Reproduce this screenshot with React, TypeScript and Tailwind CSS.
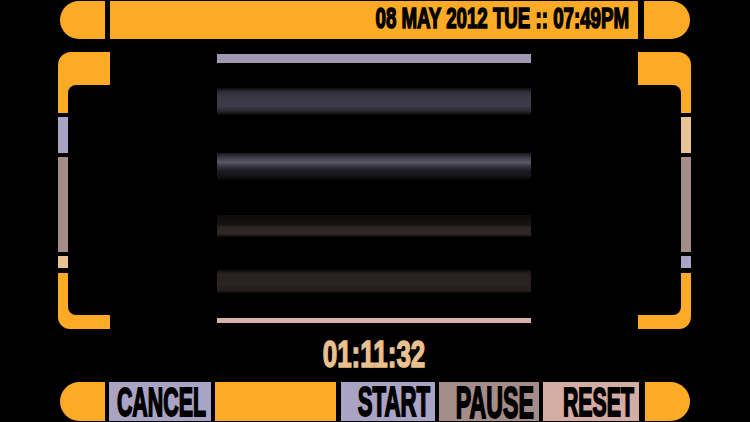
import React from 'react';

const ORANGE = 'bg-[#fdab26]';

// small inner-corner fillet for the LCARS elbows
const Fillet = ({ corner }: { corner: string }) => (
  <div className={`w-[8px] h-[8px] ${ORANGE}`}>
    <div className={`w-full h-full bg-black ${corner}`} />
  </div>
);

const Button = ({ label, size, className }: { label: string; size: string; className: string }) => (
  <div className={`flex h-full items-center justify-end pr-[5px] pt-[3px] ${className}`}>
    <span
      className={`inline-block scale-y-[1.9] whitespace-nowrap leading-[18px] font-bold text-black [-webkit-text-stroke:1px_#000] ${size}`}
    >
      {label}
    </span>
  </div>
);

const Stripe = ({ className }: { className: string }) => <div className={`w-full ${className}`} />;

export default function App() {
  return (
    <div className="w-[750px] h-[422px] bg-black overflow-hidden flex flex-col font-['Liberation_Sans',Arial,sans-serif]">
      {/* Top bar */}
      <div className="mt-[1px] h-[38px] pl-[60px] flex">
        <div className={`w-[45px] h-full rounded-l-full ${ORANGE}`} />
        <div className={`ml-[5px] w-[528px] h-full flex items-center justify-end pr-[9px] pb-[3px] ${ORANGE}`}>
          <span className="inline-block scale-y-[1.57] whitespace-nowrap text-[18.7px] leading-[16px] font-bold text-black [-webkit-text-stroke:1px_#000]">
            08 MAY 2012 TUE :: 07:49PM
          </span>
        </div>
        <div className={`ml-[6px] w-[46px] h-full rounded-r-full ${ORANGE}`} />
      </div>

      {/* Middle */}
      <div className="mt-[13px] h-[330px] pl-[58px] flex">
        {/* Left column */}
        <div className="w-[52px] flex flex-col">
          <div className={`h-[33px] w-full rounded-tl-[13px] ${ORANGE}`} />
          <div className="flex">
            <div className={`w-[10px] h-[28px] ${ORANGE}`} />
            <Fillet corner="rounded-tl-[8px]" />
          </div>
          <div className="mt-[4px] w-[10px] h-[36px] bg-[#aaa4c4]" />
          <div className="mt-[4px] w-[10px] h-[95px] bg-[#a48c88]" />
          <div className="mt-[4px] w-[10px] h-[12px] bg-[#e9c394]" />
          <div className="mt-[5px] flex items-end">
            <div className={`w-[10px] h-[42px] ${ORANGE}`} />
            <Fillet corner="rounded-bl-[8px]" />
          </div>
          <div className={`h-[14px] w-full rounded-bl-[12px] ${ORANGE}`} />
        </div>

        {/* Center */}
        <div className="w-[528px] flex justify-center">
          <div className="w-[314px] flex flex-col">
            <div className="mt-[2px] h-[9px] w-full bg-[#a097b0]" />
            <Stripe className="mt-[25px] h-[27px] bg-[linear-gradient(to_bottom,#0b0b0e_0%,#302e38_15%,#3b3945_35%,#3d3b47_65%,#2a2931_85%,#050506_100%)]" />
            <Stripe className="mt-[38px] h-[27px] bg-[linear-gradient(to_bottom,#18171c_0%,#3a3842_15%,#5b5865_35%,#3a3842_48%,#1d1c22_65%,#141317_85%,#050505_100%)]" />
            <Stripe className="mt-[35px] h-[22px] bg-[linear-gradient(to_bottom,#0d0b0b_0%,#171312_45%,#2e2624_55%,#302826_85%,#0a0808_100%)]" />
            <Stripe className="mt-[33px] h-[23px] bg-[linear-gradient(to_bottom,#0f0c0b_0%,#27201e_15%,#2b2422_60%,#231d1b_90%,#0a0808_100%)]" />
            <div className="mt-[25px] h-[5px] w-full bg-[#d7b1aa]" />
            <div className="mt-[20px] flex justify-center">
              <span className="inline-block scale-y-[1.45] whitespace-nowrap text-[26px] leading-[22px] font-bold text-[#e9c08f] [-webkit-text-stroke:1px_#e9c08f]">
                01:11:32
              </span>
            </div>
          </div>
        </div>

        {/* Right column */}
        <div className="w-[53px] flex flex-col items-end">
          <div className={`h-[33px] w-full rounded-tr-[13px] ${ORANGE}`} />
          <div className="flex">
            <Fillet corner="rounded-tr-[8px]" />
            <div className={`w-[10px] h-[28px] ${ORANGE}`} />
          </div>
          <div className="mt-[4px] w-[10px] h-[36px] bg-[#e9c394]" />
          <div className="mt-[4px] w-[10px] h-[95px] bg-[#a48c88]" />
          <div className="mt-[4px] w-[10px] h-[12px] bg-[#aaa4c4]" />
          <div className="mt-[5px] flex items-end">
            <Fillet corner="rounded-br-[8px]" />
            <div className={`w-[10px] h-[42px] ${ORANGE}`} />
          </div>
          <div className={`h-[14px] w-full rounded-br-[12px] ${ORANGE}`} />
        </div>
      </div>

      {/* Bottom bar */}
      <div className="h-[39px] pl-[60px] flex">
        <div className={`w-[45px] h-full rounded-l-full ${ORANGE}`} />
        <Button label="CANCEL" size="text-[21.4px]" className="ml-[4px] w-[102px] bg-[#aaa4c4]" />
        <div className={`ml-[4px] w-[121px] h-full ${ORANGE}`} />
        <Button label="START" size="text-[22.2px]" className="ml-[5px] w-[94px] bg-[#aaa4c4]" />
        <Button label="PAUSE" size="text-[23.2px]" className="ml-[4px] w-[100px] bg-[#a48c88]" />
        <Button label="RESET" size="text-[21.3px]" className="ml-[4px] w-[96px] bg-[#d4aca4]" />
        <div className={`ml-[6px] w-[45px] h-full rounded-r-full ${ORANGE}`} />
      </div>
    </div>
  );
}
